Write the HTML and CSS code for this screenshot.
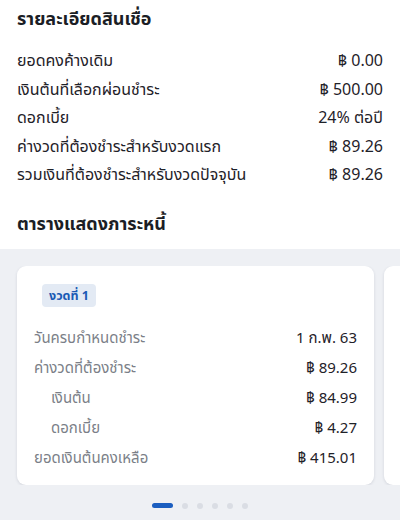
FILE: index.html
```html
<!DOCTYPE html>
<html lang="th">

<head>
    <meta charset="UTF-8">
    <meta name="viewport" content="width=device-width, initial-scale=1.0">
    <title>รายละเอียดสินเชื่อ</title>
    <link rel="stylesheet" href="styles.css">
</head>

<body>
<div class="loan-detail">
    <h2 class="loan-title">รายละเอียดสินเชื่อ</h2>
    <div class="loan-row">
        <span>ยอดคงค้างเดิม</span>
        <span>฿ 0.00</span>
    </div>
    <div class="loan-row">
        <span>เงินต้นที่เลือกผ่อนชำระ</span>
        <span>฿ 500.00</span>
    </div>
    <div class="loan-row">
        <span>ดอกเบี้ย</span>
        <span>24% ต่อปี</span>
    </div>
    <div class="loan-row">
        <span>ค่างวดที่ต้องชำระสำหรับงวดแรก</span>
        <span>฿ 89.26</span>
    </div>
    <div class="loan-row">
        <span>รวมเงินที่ต้องชำระสำหรับงวดปัจจุบัน</span>
        <span>฿ 89.26</span>
    </div>
    <h2 class="loan-title table-title">ตารางแสดงภาระหนี้</h2>
</div>

<div class="schedule">
    <div class="schedule-track">
        <div class="pay-card">
            <div class="pay-badge">งวดที่ 1</div>
            <div class="pay-row">
                <span class="pay-label">วันครบกำหนดชำระ</span>
                <span class="pay-value">1 ก.พ. 63</span>
            </div>
            <div class="pay-row">
                <span class="pay-label">ค่างวดที่ต้องชำระ</span>
                <span class="pay-value">฿ 89.26</span>
            </div>
            <div class="pay-row sub">
                <span class="pay-label">เงินต้น</span>
                <span class="pay-value">฿ 84.99</span>
            </div>
            <div class="pay-row sub">
                <span class="pay-label">ดอกเบี้ย</span>
                <span class="pay-value">฿ 4.27</span>
            </div>
            <div class="pay-row">
                <span class="pay-label">ยอดเงินต้นคงเหลือ</span>
                <span class="pay-value">฿ 415.01</span>
            </div>
        </div>
        <!-- next installment, only its edge shows -->
        <div class="pay-card"></div>
    </div>
    <div class="dots">
        <span class="dot active"></span>
        <span class="dot"></span>
        <span class="dot"></span>
        <span class="dot"></span>
        <span class="dot"></span>
        <span class="dot"></span>
    </div>
</div>
</body>

</html>
```

FILE: styles.css
```css
body {
    margin: 0;
    background-color: #ffffff;
    font-family: "Noto Sans", "Noto Sans Thai", "DejaVu Sans", sans-serif;
    color: #1f2229;
    overflow: hidden;
}

.loan-detail {
    padding: 5px 17px 0 17px;
}

.loan-title {
    margin: 0 0 15px 0;
    font-size: 18px;
    line-height: 26px;
    font-weight: bold;
    color: #1b1e25;
}

.table-title {
    margin: 21px 0 13px 0;
}

.loan-row {
    display: flex;
    justify-content: space-between;
    font-size: 16px;
    line-height: 28.5px;
}

.schedule {
    background-color: #eef0f4;
    padding-top: 17px;
    height: 272px;
}

.schedule-track {
    display: flex;
    gap: 10px;
    padding-left: 17px;
    overflow: hidden;
}

.pay-card {
    flex: 0 0 357px;
    box-sizing: border-box;
    height: 219px;
    background-color: #ffffff;
    border-radius: 9px;
    box-shadow: 0 1px 3px rgba(40, 50, 80, 0.14);
    padding: 17px 17px 12px 17px;
}

.pay-badge {
    display: inline-block;
    margin: 0 0 15px 8px;
    padding: 0 7px;
    height: 23px;
    line-height: 23px;
    border-radius: 4px;
    background-color: #e3eaf4;
    color: #1a5ab4;
    font-size: 12.5px;
    font-weight: bold;
}

.pay-row {
    display: flex;
    justify-content: space-between;
    font-size: 15px;
    line-height: 30px;
}

.pay-row.sub .pay-label {
    padding-left: 17px;
}

.pay-label {
    color: #7b7f88;
}

.pay-value {
    color: #1f2229;
}

.dots {
    display: flex;
    justify-content: center;
    align-items: center;
    gap: 9px;
    margin-top: 18px;
    padding-right: 1px;
}

.dot {
    width: 6px;
    height: 6px;
    border-radius: 50%;
    background-color: #dadde4;
}

.dot.active {
    width: 21px;
    height: 5px;
    border-radius: 3px;
    background-color: #1b5ec0;
}
```
